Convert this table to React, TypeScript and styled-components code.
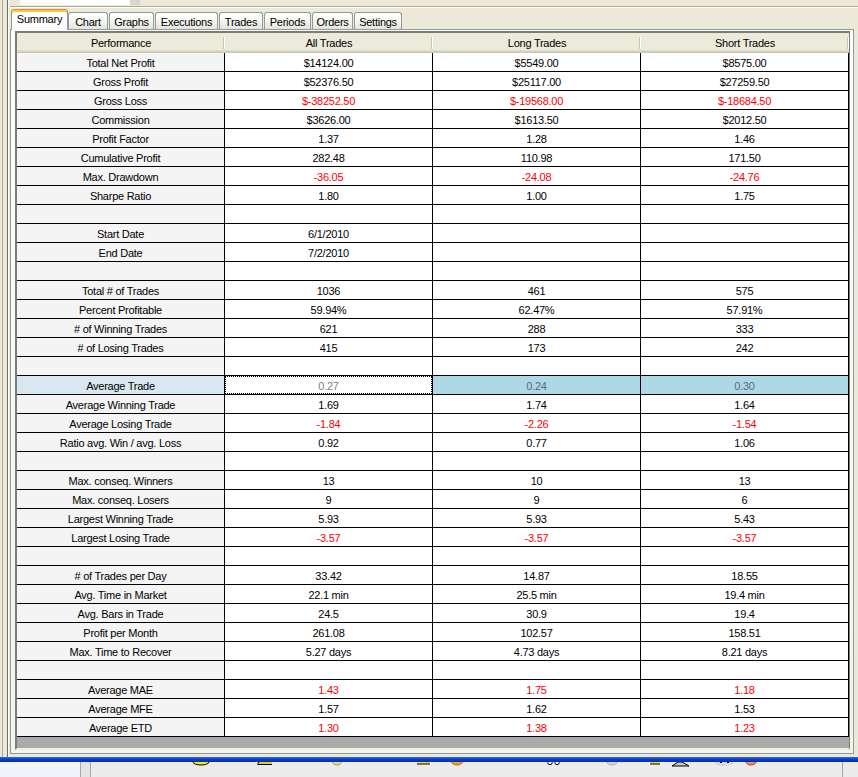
import React from "react";
import styled, { createGlobalStyle, css } from "styled-components";

const GlobalStyle = createGlobalStyle`
  html, body { margin: 0; padding: 0; background: #ECE9D8; }
  body { font-family: "Liberation Sans", Arial, sans-serif; font-size: 11px; color: #000; }
  #root { width: 858px; height: 777px; overflow: hidden; }
`;

const Screen = styled.div`
  width: 858px;
  height: 777px;
  display: flex;
  flex-direction: column;
  overflow: hidden;
  background: #ECE9D8;
`;

const Workspace = styled.div`
  display: flex;
  height: 757px;
  flex: none;
`;

const LeftRail = styled.div`
  width: 10px;
  flex: none;
  background: linear-gradient(
    to right,
    #ECE9D8 0 2px,
    #ACA899 2px 3px,
    #ECE9D8 3px 7px,
    #716F64 7px 8px,
    #FFFFFF 8px 9px,
    #ECE9D8 9px 10px
  );
`;

const MainColumn = styled.div`
  flex: 1;
  min-width: 0;
  display: flex;
  flex-direction: column;
`;

const TopStrip = styled.div`
  height: 9px;
  flex: none;
  display: flex;
  align-items: flex-start;
  padding-left: 10px;
  background: linear-gradient(
    to bottom,
    transparent 0 6px,
    #ACA899 6px 7px,
    #FFFFFF 7px 8px,
    transparent 8px
  );
`;

const TopField = styled.div`
  width: 110px;
  height: 5px;
  background: #FFFFFF;
`;

const TopFieldButton = styled.div`
  width: 10px;
  height: 5px;
  background: #DAD7C9;
`;

const TabStrip = styled.div`
  height: 20px;
  flex: none;
  display: flex;
  align-items: flex-end;
  padding-left: 1px;
  position: relative;
  z-index: 1;
`;

const Tab = styled.div<{ $active?: boolean; $w: number; $gap: number }>`
  box-sizing: border-box;
  width: ${(p) => p.$w}px;
  margin-left: ${(p) => p.$gap}px;
  height: 17px;
  border: 1px solid #919B9C;
  border-bottom: none;
  border-radius: 3px 3px 0 0;
  background: linear-gradient(#FFFFFF, #F4F4F0 55%, #E4E3DB);
  display: flex;
  align-items: center;
  justify-content: center;
  font-family: "Liberation Sans", Arial, sans-serif;
  font-size: 11px;
  letter-spacing: -0.25px;
  white-space: nowrap;
  color: #000;
  padding-top: 1px;
  ${(p) =>
    p.$active &&
    css`
      height: 21px;
      margin-bottom: -1px;
      border-top: 1px solid #E68B2C;
      box-shadow: inset 0 2px #FFC73C;
      background: #FCFCFE;
      padding-top: 0;
      padding-bottom: 2px;
    `}
`;

const Page = styled.div`
  box-sizing: border-box;
  width: 844px;
  height: 725px;
  flex: none;
  border: 1px solid #919B9C;
  background: linear-gradient(#FCFCFE, #F4F3EE);
  padding: 1px 3px 3px 4px;
`;

const Grid = styled.div`
  box-sizing: border-box;
  width: 835px;
  height: 719px;
  border-top: 2px solid #7E7C72;
  border-left: 2px solid #7E7C72;
  border-right: 1px solid #7E7C72;
  border-bottom: 2px solid #F1EFE2;
  background: #ABABAB;
  display: grid;
  grid-template-columns: repeat(4, 208px);
  grid-template-rows: 20px;
  grid-auto-rows: 19px;
  align-content: start;
  font-size: 11px;
  letter-spacing: -0.25px;
`;

const HeadCell = styled.div`
  position: relative;
  box-sizing: border-box;
  height: 20px;
  padding-top: 1px;
  line-height: 19px;
  overflow: hidden;
  text-align: center;
  background: #EBEADB;
  box-shadow: inset 0 -1px #CBC7B8, inset 0 -2px #D6D2C2, inset 0 -3px #E2DECD;
  white-space: nowrap;
  &::after {
    content: "";
    position: absolute;
    right: 0;
    top: 4px;
    bottom: 4px;
    width: 2px;
    background: linear-gradient(to right, #C7C5B2 0 1px, #FFFFFF 1px);
  }
`;

type Tone = "normal" | "red";
type Sel = "none" | "label" | "focus" | "hl";

const Cell = styled.div<{ $label?: boolean; $tone: Tone; $sel: Sel }>`
  position: relative;
  box-sizing: border-box;
  height: 19px;
  padding-top: 1px;
  line-height: 18px;
  text-align: center;
  white-space: nowrap;
  overflow: hidden;
  border-right: 1px solid #000;
  border-bottom: 1px solid #000;
  background: ${(p) => (p.$label ? "#F4F4F4" : "#FFFFFF")};
  color: ${(p) => (p.$tone === "red" && !p.$label ? "#FF0000" : "#000000")};
  ${(p) =>
    p.$sel === "label" &&
    css`
      background: #D9E8F0;
      color: #000;
    `}
  ${(p) =>
    p.$sel === "focus" &&
    css`
      background: #FFFFFF;
      color: #808080;
      &::after {
        content: "";
        position: absolute;
        inset: 0;
        border: 1px dotted #000;
      }
    `}
  ${(p) =>
    p.$sel === "hl" &&
    css`
      background: #ADD8E6;
      color: #5E6A72;
    `}
`;

const BlueBand = styled.div`
  height: 5px;
  flex: none;
  background: linear-gradient(#2D66EC, #0A40D0 45%, #0030A8);
`;

const BottomBar = styled.div`
  height: 15px;
  flex: none;
  display: flex;
  background: #ECECEC;
`;

const BottomLeftPane = styled.div`
  width: 80px;
  flex: none;
  background: #F0F4F9;
  border-right: 1px solid #A7A6AA;
`;

const BottomSplitter = styled.div`
  width: 9px;
  flex: none;
  background: #E4E4E4;
  border-right: 1px solid #A7A6AA;
`;

const IconRow = styled.div`
  flex: 1;
  min-width: 0;
  overflow: hidden;
  border-right: 1px solid #A7A6AA;
  svg { display: block; }
`;

const BottomRightPane = styled.div`
  width: 15px;
  flex: none;
`;

type Row = {
  label: string;
  v: [string, string, string];
  tone?: Tone;
  selected?: boolean;
};

const B: Row = { label: "", v: ["", "", ""] };

const rows: Row[] = [
  { label: "Total Net Profit", v: ["$14124.00", "$5549.00", "$8575.00"] },
  { label: "Gross Profit", v: ["$52376.50", "$25117.00", "$27259.50"] },
  { label: "Gross Loss", v: ["$-38252.50", "$-19568.00", "$-18684.50"], tone: "red" },
  { label: "Commission", v: ["$3626.00", "$1613.50", "$2012.50"] },
  { label: "Profit Factor", v: ["1.37", "1.28", "1.46"] },
  { label: "Cumulative Profit", v: ["282.48", "110.98", "171.50"] },
  { label: "Max. Drawdown", v: ["-36.05", "-24.08", "-24.76"], tone: "red" },
  { label: "Sharpe Ratio", v: ["1.80", "1.00", "1.75"] },
  B,
  { label: "Start Date", v: ["6/1/2010", "", ""] },
  { label: "End Date", v: ["7/2/2010", "", ""] },
  B,
  { label: "Total # of Trades", v: ["1036", "461", "575"] },
  { label: "Percent Profitable", v: ["59.94%", "62.47%", "57.91%"] },
  { label: "# of Winning Trades", v: ["621", "288", "333"] },
  { label: "# of Losing Trades", v: ["415", "173", "242"] },
  B,
  { label: "Average Trade", v: ["0.27", "0.24", "0.30"], selected: true },
  { label: "Average Winning Trade", v: ["1.69", "1.74", "1.64"] },
  { label: "Average Losing Trade", v: ["-1.84", "-2.26", "-1.54"], tone: "red" },
  { label: "Ratio avg. Win / avg. Loss", v: ["0.92", "0.77", "1.06"] },
  B,
  { label: "Max. conseq. Winners", v: ["13", "10", "13"] },
  { label: "Max. conseq. Losers", v: ["9", "9", "6"] },
  { label: "Largest Winning Trade", v: ["5.93", "5.93", "5.43"] },
  { label: "Largest Losing Trade", v: ["-3.57", "-3.57", "-3.57"], tone: "red" },
  B,
  { label: "# of Trades per Day", v: ["33.42", "14.87", "18.55"] },
  { label: "Avg. Time in Market", v: ["22.1 min", "25.5 min", "19.4 min"] },
  { label: "Avg. Bars in Trade", v: ["24.5", "30.9", "19.4"] },
  { label: "Profit per Month", v: ["261.08", "102.57", "158.51"] },
  { label: "Max. Time to Recover", v: ["5.27 days", "4.73 days", "8.21 days"] },
  B,
  { label: "Average MAE", v: ["1.43", "1.75", "1.18"], tone: "red" },
  { label: "Average MFE", v: ["1.57", "1.62", "1.53"] },
  { label: "Average ETD", v: ["1.30", "1.38", "1.23"], tone: "red" },
];

const tabs: { name: string; w: number; gap: number; active?: boolean }[] = [
  { name: "Summary", w: 57, gap: 0, active: true },
  { name: "Chart", w: 40, gap: 0 },
  { name: "Graphs", w: 45, gap: 1 },
  { name: "Executions", w: 63, gap: 1 },
  { name: "Trades", w: 44, gap: 1 },
  { name: "Periods", w: 47, gap: 1 },
  { name: "Orders", w: 41, gap: 1 },
  { name: "Settings", w: 48, gap: 1 },
];

const headers = ["Performance", "All Trades", "Long Trades", "Short Trades"];

const TaskIcons: React.FC = () => (
  <svg width="751" height="15" viewBox="0 0 751 15">
    <ellipse cx="110" cy="0" rx="8" ry="3" fill="#FFE800" stroke="#000" strokeWidth="1" />
    <path d="M167 0 h14 v2 h-14 z" fill="#F2D000" />
    <path d="M167 2.5 h14" stroke="#000" strokeWidth="1" />
    <path d="M168 0 q-2 2 -1 3" stroke="#000" strokeWidth="1" fill="none" />
    <ellipse cx="246" cy="-1" rx="5" ry="4" fill="#E8D890" stroke="#A89858" strokeWidth="1" />
    <path d="M326 0 h13 v1.5 h-13 z" fill="#FFE000" />
    <path d="M326 2 h13" stroke="#000" strokeWidth="1" />
    <ellipse cx="366" cy="-1" rx="6" ry="4" fill="#F0A020" stroke="#B87010" strokeWidth="1" />
    <circle cx="459" cy="0.5" r="2.2" fill="#fff" stroke="#000" strokeWidth="1" />
    <circle cx="466" cy="0.5" r="2.2" fill="#fff" stroke="#000" strokeWidth="1" />
    <ellipse cx="521" cy="0" rx="5" ry="3" fill="#D4D4D4" stroke="#B0B0B0" strokeWidth="1" />
    <path d="M559 0 h10 v1.5 h-10 z" fill="#FFE000" />
    <path d="M559 2 h10" stroke="#000" strokeWidth="1" />
    <path d="M581 4 l6 -4 h4 l7 4 z" fill="#C8C8C8" stroke="#000" strokeWidth="1" />
    <ellipse cx="633" cy="1" rx="9" ry="3" fill="#D8D8D8" />
    <path d="M629 0 h2 M636 0 h2" stroke="#000" strokeWidth="2" />
    <ellipse cx="660" cy="0" rx="5" ry="3" fill="#E89060" stroke="#C04030" strokeWidth="1" />
  </svg>
);

export default function App() {
  return (
    <>
      <GlobalStyle />
      <Screen>
        <Workspace>
          <LeftRail />
          <MainColumn>
            <TopStrip>
              <TopField />
              <TopFieldButton />
            </TopStrip>
            <TabStrip>
              {tabs.map((t) => (
                <Tab key={t.name} $w={t.w} $gap={t.gap} $active={t.active}>
                  {t.name}
                </Tab>
              ))}
            </TabStrip>
            <Page>
              <Grid>
                {headers.map((h) => (
                  <HeadCell key={h}>{h}</HeadCell>
                ))}
                {rows.map((r, i) => (
                  <React.Fragment key={i}>
                    <Cell $label $tone="normal" $sel={r.selected ? "label" : "none"}>
                      {r.label}
                    </Cell>
                    {r.v.map((v, j) => (
                      <Cell
                        key={j}
                        $tone={r.tone ?? "normal"}
                        $sel={r.selected ? (j === 0 ? "focus" : "hl") : "none"}
                      >
                        {v}
                      </Cell>
                    ))}
                  </React.Fragment>
                ))}
              </Grid>
            </Page>
          </MainColumn>
        </Workspace>
        <BlueBand />
        <BottomBar>
          <BottomLeftPane />
          <BottomSplitter />
          <IconRow>
            <TaskIcons />
          </IconRow>
          <BottomRightPane />
        </BottomBar>
      </Screen>
    </>
  );
}
